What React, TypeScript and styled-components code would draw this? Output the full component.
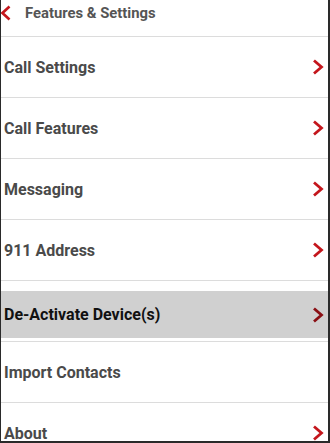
import React from "react";
import styled, { createGlobalStyle } from "styled-components";

const Global = createGlobalStyle`
  html, body { margin: 0; padding: 0; background: #fff; overflow: hidden; }
  * { box-sizing: border-box; }
`;

const Frame = styled.div`
  width: 330px;
  height: 443px;
  overflow: hidden;
  background: #fff;
  border-left: 1px solid #2a2a2a;
  border-right: 2px solid #2a2a2a;
  border-bottom: 2px solid #2a2a2a;
  font-family: Roboto, "Liberation Sans", Arial, sans-serif;
`;

const Header = styled.div`
  height: 37px;
  padding-bottom: 10px;
  display: flex;
  align-items: center;
  border-bottom: 1px solid #dcdcdc;
`;

const BackIcon = styled.svg`
  width: 11px;
  height: 16px;
  margin-left: -1px;
  flex: none;
`;

const Title = styled.span`
  margin-left: 14px;
  font-size: 14.8px;
  font-weight: 700;
  color: #555;
`;

const Row = styled.div<{ $pressed?: boolean }>`
  height: 61px;
  display: flex;
  align-items: center;
  justify-content: space-between;
  padding: ${(p) => (p.$pressed ? "10px 0 3px" : "0")};
  background-color: ${(p) => (p.$pressed ? "#d0d0d0" : "transparent")};
  background-clip: content-box;
  border-bottom: 1px solid #dcdcdc;
`;

const Label = styled.span<{ $pressed?: boolean }>`
  margin-left: 3px;
  font-size: 16px;
  font-weight: 700;
  color: ${(p) => (p.$pressed ? "#111" : "#4a4a4a")};
`;

const Chevron = styled.svg`
  width: 12px;
  height: 16px;
  margin-right: 4px;
  flex: none;
`;

type Item = { label: string; arrow: boolean; pressed?: boolean };

const items: Item[] = [
  { label: "Call Settings", arrow: true },
  { label: "Call Features", arrow: true },
  { label: "Messaging", arrow: true },
  { label: "911 Address", arrow: true },
  { label: "De-Activate Device(s)", arrow: true, pressed: true },
  { label: "Import Contacts", arrow: false },
  { label: "About", arrow: true },
];

export default function App() {
  return (
    <>
      <Global />
      <Frame>
        <Header>
          <BackIcon viewBox="0 0 11 16">
            <polyline
              points="9.5,1.5 2.5,8 9.5,14.5"
              fill="none"
              stroke="#c4161c"
              strokeWidth="2.6"
            />
          </BackIcon>
          <Title>Features &amp; Settings</Title>
        </Header>
        {items.map((it) => (
          <Row key={it.label} $pressed={it.pressed}>
            <Label $pressed={it.pressed}>{it.label}</Label>
            {it.arrow && (
              <Chevron viewBox="0 0 12 16">
                <polyline
                  points="2,1.5 9.5,8 2,14.5"
                  fill="none"
                  stroke={it.pressed ? "#8a0f14" : "#c4161c"}
                  strokeWidth="2.8"
                />
              </Chevron>
            )}
          </Row>
        ))}
      </Frame>
    </>
  );
}
